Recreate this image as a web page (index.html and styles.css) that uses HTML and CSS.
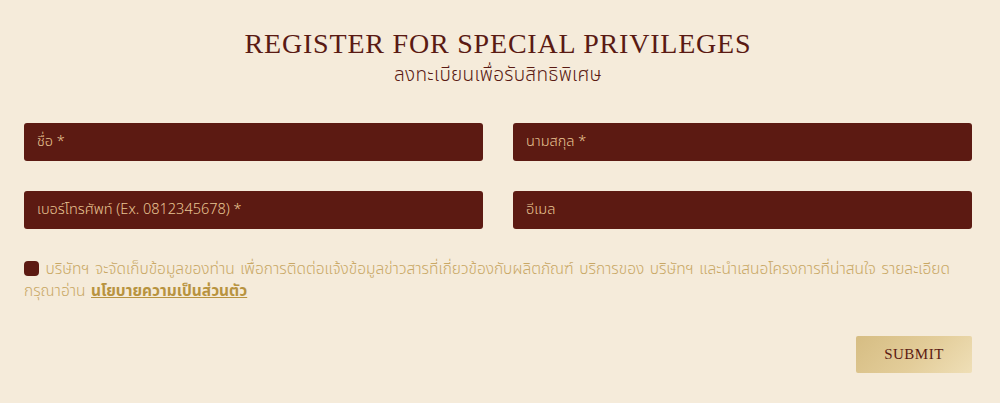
FILE: index.html
```html
<!DOCTYPE html>
<html>
<head>
<meta charset="utf-8">
<title>Register</title>
<link rel="stylesheet" href="styles.css">
</head>
<body>
<section class="register">
	<h1 class="title">REGISTER FOR SPECIAL PRIVILEGES</h1>
	<p class="subtitle">ลงทะเบียนเพื่อรับสิทธิพิเศษ</p>
	<form class="form" action="#" method="post">
		<div class="fields">
			<input class="field" type="text" name="firstName" placeholder="ชื่อ *">
			<input class="field" type="text" name="lastName" placeholder="นามสกุล *">
			<input class="field" type="tel" name="phone" placeholder="เบอร์โทรศัพท์ (Ex. 0812345678) *">
			<input class="field" type="email" name="email" placeholder="อีเมล">
		</div>
		<label class="consent">
			<input class="check" type="checkbox" name="consent"><span class="box"></span> <span>บริษัทฯ จะจัดเก็บข้อมูลของท่าน เพื่อการติดต่อแจ้งข้อมูลข่าวสารที่เกี่ยวข้องกับผลิตภัณฑ์ บริการของ บริษัทฯ และนำเสนอโครงการที่น่าสนใจ รายละเอียด</span> <span>กรุณาอ่าน</span> <a class="policy" href="#">นโยบายความเป็นส่วนตัว</a>
		</label>
		<div class="actions">
			<button class="submit" type="button">SUBMIT</button>
		</div>
	</form>
</section>
</body>
</html>
```

FILE: styles.css
```css
body{
	margin:0;
	background:#f5ebda;
	font-family:"Noto Sans Thai","Noto Sans","DejaVu Sans",sans-serif;
}

.register{
	width:948px;
	margin-left:24px;
	padding-top:26px;
}

.title{
	margin:0;
	text-align:center;
	font-family:"Liberation Serif",serif;
	font-weight:normal;
	font-size:28px;
	letter-spacing:0.8px;
	line-height:36px;
	color:#5a1a13;
}

.subtitle{
	margin:1px 0 0;
	text-align:center;
	font-size:19px;
	font-weight:300;
	letter-spacing:0.3px;
	line-height:26px;
	color:#5a1a13;
}

.form{
	margin-top:34px;
}

.fields{
	display:grid;
	grid-template-columns:1fr 1fr;
	column-gap:30px;
	row-gap:30px;
}

.field{
	height:38px;
	box-sizing:border-box;
	border:none;
	border-radius:3px;
	background:#5c1a12;
	padding:0 13px;
	font-family:inherit;
	font-size:14.5px;
	font-weight:300;
	color:#f0d4a6;
	outline:none;
}
.field::placeholder{
	color:#e9c592;
}

.consent{
	display:block;
	margin-top:30px;
	font-size:15.5px;
	font-weight:300;
	word-spacing:1.5px;
	line-height:22px;
	color:#c9a865;
	cursor:pointer;
}
.check{
	display:none;
}
.box{
	display:inline-block;
	width:15px;
	height:15px;
	margin-right:1px;
	vertical-align:-2px;
	border-radius:4px;
	background:#5c1a12;
}
.policy{
	font-weight:bold;
	word-spacing:0;
	color:#b8933f;
	text-decoration:underline;
}

.actions{
	display:flex;
	justify-content:flex-end;
	margin-top:33px;
}
.submit{
	width:116px;
	height:37px;
	border:none;
	border-radius:2px;
	background:linear-gradient(135deg,#d6bd83 0%,#e3cd9a 55%,#efdfb7 100%);
	font-family:"Liberation Serif",serif;
	font-size:15px;
	letter-spacing:0.5px;
	color:#5c1a12;
	cursor:pointer;
}
```
